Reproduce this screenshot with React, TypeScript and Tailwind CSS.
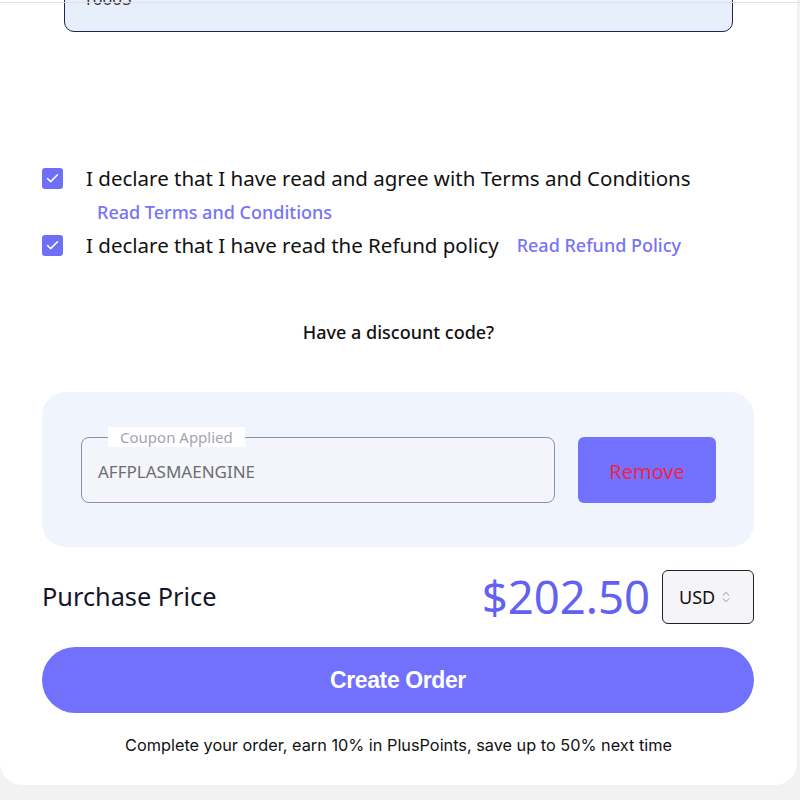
import { Check, ChevronsUpDown } from "lucide-react";

export default function App() {
  return (
    <div className="relative h-[800px] w-[800px] overflow-hidden bg-[#f2f2f2]" style={{ fontFamily: "'Noto Sans', sans-serif" }}>
      {/* top divider */}
      <div className="absolute left-0 right-0 top-[2px] z-10 h-px bg-[#e4dff0]" />

      <div className="flow-root h-[785px] w-[797px] rounded-b-[22px] bg-white">
        {/* previous field, scrolled off */}
        <div className="px-[64px]">
          <div className="-mt-[29px] h-[61px] w-[669px] rounded-[10px] border border-[#1d2747] bg-[#e8effc] px-[18px] pt-[14px] text-[17px] text-[#333]">
            10005
          </div>
        </div>

        {/* agreements */}
        <div className="mt-[134px] flex flex-col pl-[42px] text-[20.5px] text-[#111]">
          <div className="flex items-center">
            <span className="flex h-[21px] w-[21px] items-center justify-center rounded-[3px] bg-[#6f6ef6]">
              <Check className="h-[15px] w-[15px] text-white" strokeWidth={2.5} />
            </span>
            <span className="ml-[23px] leading-[24px]">I declare that I have read and agree with Terms and Conditions</span>
          </div>
          <a className="ml-[55px] mt-[10px] text-[18px] font-medium leading-[24px] text-[#7673f7]">Read Terms and Conditions</a>
          <div className="mt-[9px] flex items-center">
            <span className="flex h-[21px] w-[21px] items-center justify-center rounded-[3px] bg-[#6f6ef6]">
              <Check className="h-[15px] w-[15px] text-white" strokeWidth={2.5} />
            </span>
            <span className="ml-[23px] leading-[24px]">I declare that I have read the Refund policy</span>
            <a className="ml-[18px] text-[18px] font-medium leading-[24px] text-[#7673f7]">Read Refund Policy</a>
          </div>
        </div>

        <p className="mt-[63px] text-center text-[18px] font-medium leading-[24px] text-[#111]">Have a discount code?</p>

        {/* coupon panel */}
        <div className="mx-[42px] mt-[48px] flex h-[155px] w-[712px] items-center rounded-[24px] bg-[#f0f5fd] pl-[39px]">
          <div className="relative flex h-[66px] w-[474px] items-center rounded-[8px] border border-[#8b90a4] bg-[#f3f5fa] px-[16px] pt-[4px]">
            <span className="absolute -top-[11px] left-[26px] bg-white px-[12px] text-[15px] leading-[20px] text-[#a3a3b3]">Coupon Applied</span>
            <span className="text-[17px] text-[#6d6d6d]">AFFPLASMAENGINE</span>
          </div>
          <button className="ml-[23px] h-[66px] w-[138px] rounded-[6px] bg-[#7272ff] pt-[4px] text-[20px] text-[#f0234b]">Remove</button>
        </div>

        {/* price */}
        <div className="mx-[42px] mt-[23px] flex h-[54px] w-[712px] items-center">
          <span className="text-[25.3px] text-[#14142b]">Purchase Price</span>
          <span className="ml-auto text-[45.5px] leading-none text-[#6262f2]">$202.50</span>
          <div className="ml-[12px] flex h-[54px] w-[92px] items-center rounded-[6px] border border-[#1d2230] bg-[#f5f5f7] pl-[16px] text-[18px] text-[#111]">
            USD
            <ChevronsUpDown className="ml-[4px] h-[14px] w-[14px] text-[#888]" strokeWidth={1.5} />
          </div>
        </div>

        <button className="mx-[42px] mt-[23px] flex h-[66px] w-[712px] items-center justify-center rounded-full bg-[#7171fd] text-[23px] font-bold tracking-[-0.4px] text-white" style={{ fontFamily: "'Liberation Sans', sans-serif" }}>
          Create Order
        </button>

        <p className="mt-[20px] text-center text-[16.3px] text-[#111]" style={{ fontFamily: "Inter, sans-serif" }}>
          Complete your order, earn 10% in PlusPoints, save up to 50% next time
        </p>
      </div>
    </div>
  );
}
